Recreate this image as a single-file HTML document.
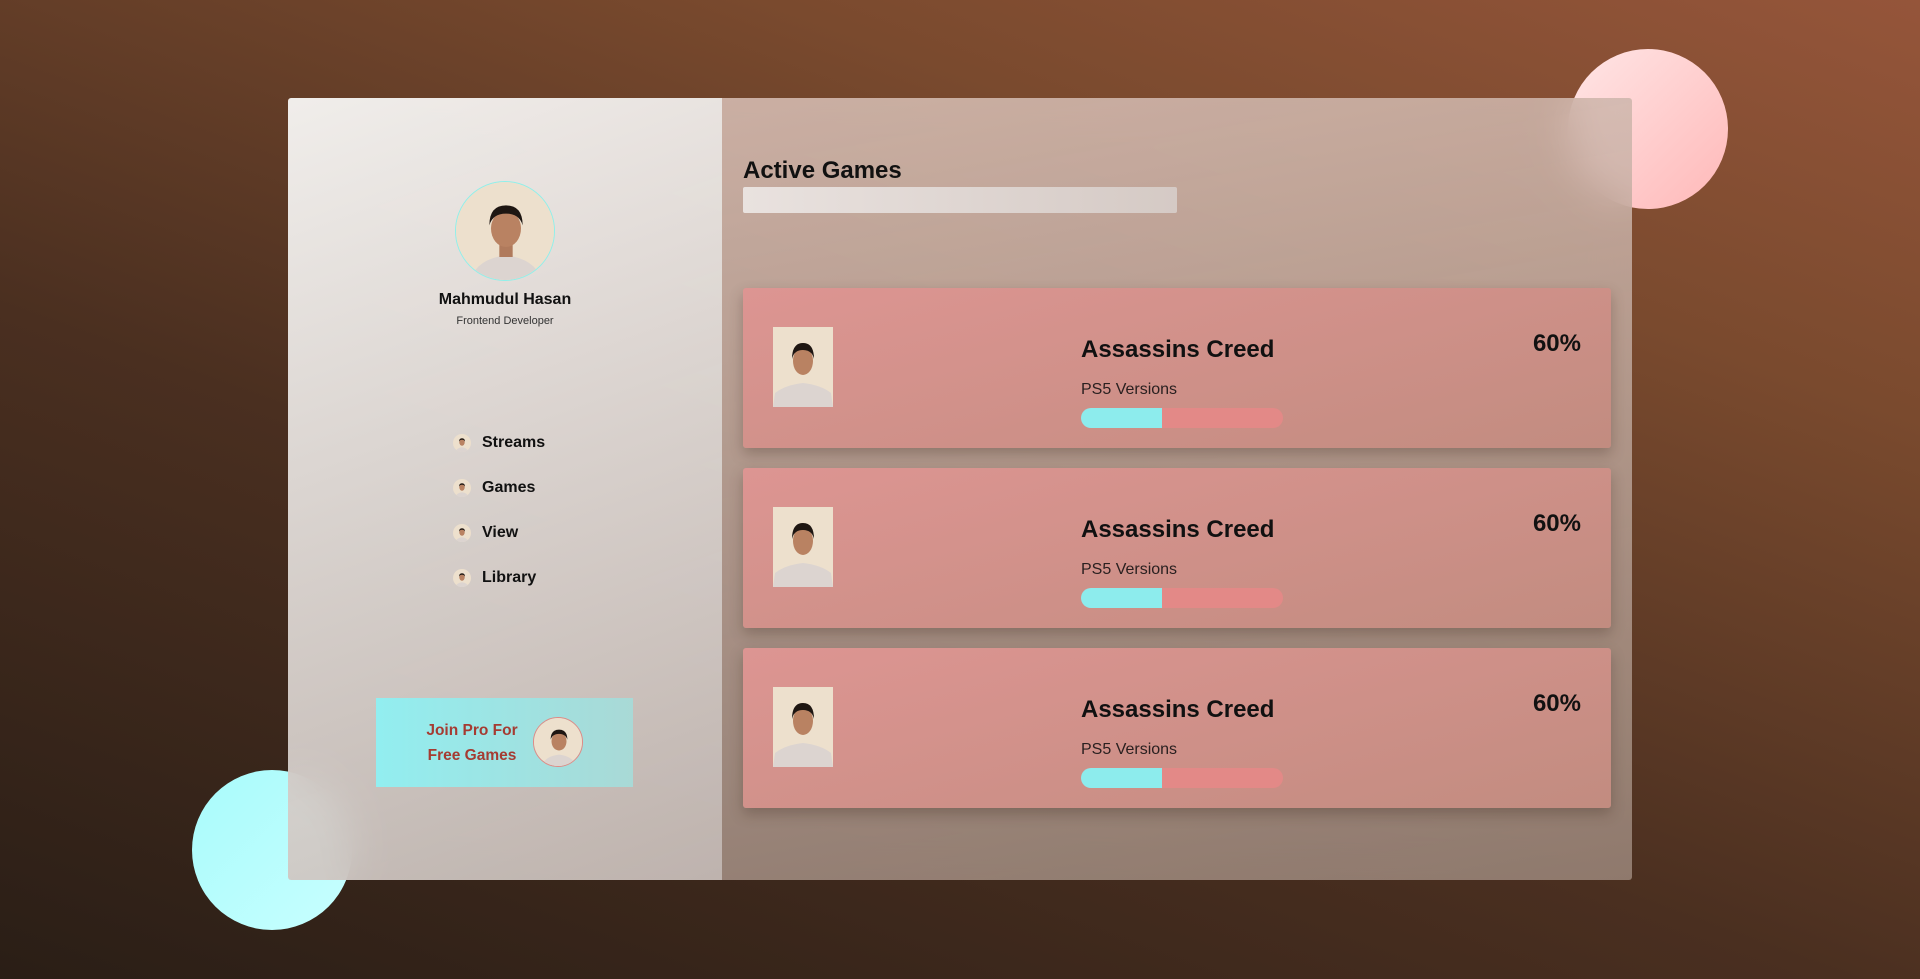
<!DOCTYPE html>
<html><head><meta charset="utf-8"><style>
*{margin:0;padding:0;box-sizing:border-box}
body{width:1920px;height:979px;overflow:hidden;font-family:"Liberation Sans",sans-serif;background:linear-gradient(20deg,#2a1e16 0%,#4a2f20 40%,#7a4a2e 75%,#95553a 100%);position:relative}
.c1{position:absolute;left:1568px;top:49px;width:160px;height:160px;border-radius:50%;background:linear-gradient(135deg,#ffe6e6,#ffb8b8)}
.c2{position:absolute;left:192px;top:770px;width:160px;height:160px;border-radius:50%;background:linear-gradient(135deg,#a8fbfb,#c8ffff)}
.card{position:absolute;left:288px;top:98px;width:1344px;height:782px;border-radius:3px;overflow:hidden;backdrop-filter:blur(20px);-webkit-backdrop-filter:blur(20px)}
.side{position:absolute;left:0;top:0;width:434px;height:782px;background:linear-gradient(160deg,rgba(245,243,241,.97),rgba(200,190,185,.93))}
.main{position:absolute;left:434px;top:0;width:910px;height:782px;background:linear-gradient(170deg,rgba(215,190,180,.88),rgba(160,140,128,.8))}
svg{display:block}
.av{position:absolute;left:167px;top:83px;width:100px;height:100px;border-radius:50%;border:1.5px solid #8ff0ea;overflow:hidden}
.name{position:absolute;left:0;width:434px;text-align:center;top:193px;font-size:16px;font-weight:bold;color:#111}
.sub{position:absolute;left:0;width:434px;text-align:center;top:217px;font-size:11px;color:#333}
.nav{position:absolute;left:165px;font-size:16px;font-weight:bold;color:#111;display:flex;align-items:center}
.nav .i{width:18px;height:18px;border-radius:50%;overflow:hidden;margin-right:11px}
.pro{position:absolute;left:88px;top:600px;width:257px;height:89px;background:linear-gradient(90deg,#92eef0,#a9d9d6)}
.pro .t{position:absolute;left:38px;top:20px;width:116px;text-align:center;color:#a53b32;font-size:15.5px;font-weight:bold;line-height:25px}
.pro .a{position:absolute;left:157px;top:19px;width:50px;height:50px;border-radius:50%;border:1.5px solid #e08a85;overflow:hidden}
.h{position:absolute;left:21px;top:59px;font-size:24px;font-weight:bold;color:#111}
.bar0{position:absolute;left:21px;top:89px;width:434px;height:26px;border-radius:2px;background:linear-gradient(90deg,#e9e2df,#d5cac5)}
.g{position:absolute;left:21px;width:868px;height:160px;border-radius:3px;background:linear-gradient(165deg,#dd9592,#c28c80);box-shadow:0 6px 14px rgba(60,40,30,.3)}
.g .p{position:absolute;left:30px;top:39px;width:60px;height:80px;overflow:hidden}
.g .tt{position:absolute;left:338px;top:48px;font-size:24px;color:#111;font-weight:bold}
.g .ps{position:absolute;left:338px;top:93px;font-size:16px;color:#2a2020}
.g .pb{position:absolute;left:338px;top:120px;width:202px;height:20px;border-radius:10px;overflow:hidden;background:#e38987}
.g .pb i{position:absolute;left:0;top:0;width:81px;height:20px;background:#8deced}
.g .pc{position:absolute;right:30px;top:42px;font-size:24px;font-weight:bold;color:#111}
</style></head><body>
<div class="c1"></div><div class="c2"></div>
<div class="card">
<div class="side">
<div class="av"><svg width="100" height="100" viewBox="0 0 60 60"><rect width="60" height="60" fill="#ede0cd"/><path d="M8 60 Q12 46 30 44 Q48 46 52 60Z" fill="#dcd4d0"/><rect x="26" y="36" width="8" height="9" fill="#b07a5c"/><ellipse cx="30" cy="28" rx="9" ry="11" fill="#b98262"/><path d="M20 26 Q20 14 30 14 Q40 14 40 26 Q38 19 30 19 Q22 19 20 26Z" fill="#1e1612"/></svg></div>
<div class="name">Mahmudul Hasan</div>
<div class="sub">Frontend Developer</div>
<div class="nav" style="top:336px"><div class="i"><svg width="18" height="18" viewBox="0 0 60 60"><rect width="60" height="60" fill="#ede0cd"/><path d="M8 60 Q12 46 30 44 Q48 46 52 60Z" fill="#dcd4d0"/><ellipse cx="30" cy="28" rx="9" ry="11" fill="#b98262"/><path d="M20 26 Q20 14 30 14 Q40 14 40 26 Q38 19 30 19 Q22 19 20 26Z" fill="#1e1612"/></svg></div>Streams</div>
<div class="nav" style="top:381px"><div class="i"><svg width="18" height="18" viewBox="0 0 60 60"><rect width="60" height="60" fill="#ede0cd"/><path d="M8 60 Q12 46 30 44 Q48 46 52 60Z" fill="#dcd4d0"/><ellipse cx="30" cy="28" rx="9" ry="11" fill="#b98262"/><path d="M20 26 Q20 14 30 14 Q40 14 40 26 Q38 19 30 19 Q22 19 20 26Z" fill="#1e1612"/></svg></div>Games</div>
<div class="nav" style="top:426px"><div class="i"><svg width="18" height="18" viewBox="0 0 60 60"><rect width="60" height="60" fill="#ede0cd"/><path d="M8 60 Q12 46 30 44 Q48 46 52 60Z" fill="#dcd4d0"/><ellipse cx="30" cy="28" rx="9" ry="11" fill="#b98262"/><path d="M20 26 Q20 14 30 14 Q40 14 40 26 Q38 19 30 19 Q22 19 20 26Z" fill="#1e1612"/></svg></div>View</div>
<div class="nav" style="top:471px"><div class="i"><svg width="18" height="18" viewBox="0 0 60 60"><rect width="60" height="60" fill="#ede0cd"/><path d="M8 60 Q12 46 30 44 Q48 46 52 60Z" fill="#dcd4d0"/><ellipse cx="30" cy="28" rx="9" ry="11" fill="#b98262"/><path d="M20 26 Q20 14 30 14 Q40 14 40 26 Q38 19 30 19 Q22 19 20 26Z" fill="#1e1612"/></svg></div>Library</div>
<div class="pro"><div class="t">Join Pro For<br>Free Games</div><div class="a"><svg width="50" height="50" viewBox="0 0 60 60"><rect width="60" height="60" fill="#ede0cd"/><path d="M8 60 Q12 46 30 44 Q48 46 52 60Z" fill="#dcd4d0"/><ellipse cx="30" cy="28" rx="9" ry="11" fill="#b98262"/><path d="M20 26 Q20 14 30 14 Q40 14 40 26 Q38 19 30 19 Q22 19 20 26Z" fill="#1e1612"/></svg></div></div>
</div>
<div class="main">
<div class="h">Active Games</div>
<div class="bar0"></div>
<div class="g" style="top:190px"><div class="p"><svg width="60" height="80" viewBox="0 0 60 80"><rect width="60" height="80" fill="#ede0cd"/><path d="M0 80 L2 66 Q12 58 30 56 Q48 58 58 66 L60 80Z" fill="#dcd4d0"/><ellipse cx="30" cy="34" rx="10" ry="14" fill="#b98262"/><path d="M19 32 Q19 16 30 16 Q41 16 41 32 Q39 23 30 23 Q21 23 19 32Z" fill="#1e1612"/></svg></div><div class="tt">Assassins Creed</div><div class="ps">PS5 Versions</div><div class="pb"><i></i></div><div class="pc">60%</div></div>
<div class="g" style="top:370px"><div class="p"><svg width="60" height="80" viewBox="0 0 60 80"><rect width="60" height="80" fill="#ede0cd"/><path d="M0 80 L2 66 Q12 58 30 56 Q48 58 58 66 L60 80Z" fill="#dcd4d0"/><ellipse cx="30" cy="34" rx="10" ry="14" fill="#b98262"/><path d="M19 32 Q19 16 30 16 Q41 16 41 32 Q39 23 30 23 Q21 23 19 32Z" fill="#1e1612"/></svg></div><div class="tt">Assassins Creed</div><div class="ps">PS5 Versions</div><div class="pb"><i></i></div><div class="pc">60%</div></div>
<div class="g" style="top:550px"><div class="p"><svg width="60" height="80" viewBox="0 0 60 80"><rect width="60" height="80" fill="#ede0cd"/><path d="M0 80 L2 66 Q12 58 30 56 Q48 58 58 66 L60 80Z" fill="#dcd4d0"/><ellipse cx="30" cy="34" rx="10" ry="14" fill="#b98262"/><path d="M19 32 Q19 16 30 16 Q41 16 41 32 Q39 23 30 23 Q21 23 19 32Z" fill="#1e1612"/></svg></div><div class="tt">Assassins Creed</div><div class="ps">PS5 Versions</div><div class="pb"><i></i></div><div class="pc">60%</div></div>
</div>
</div>
</body></html>
